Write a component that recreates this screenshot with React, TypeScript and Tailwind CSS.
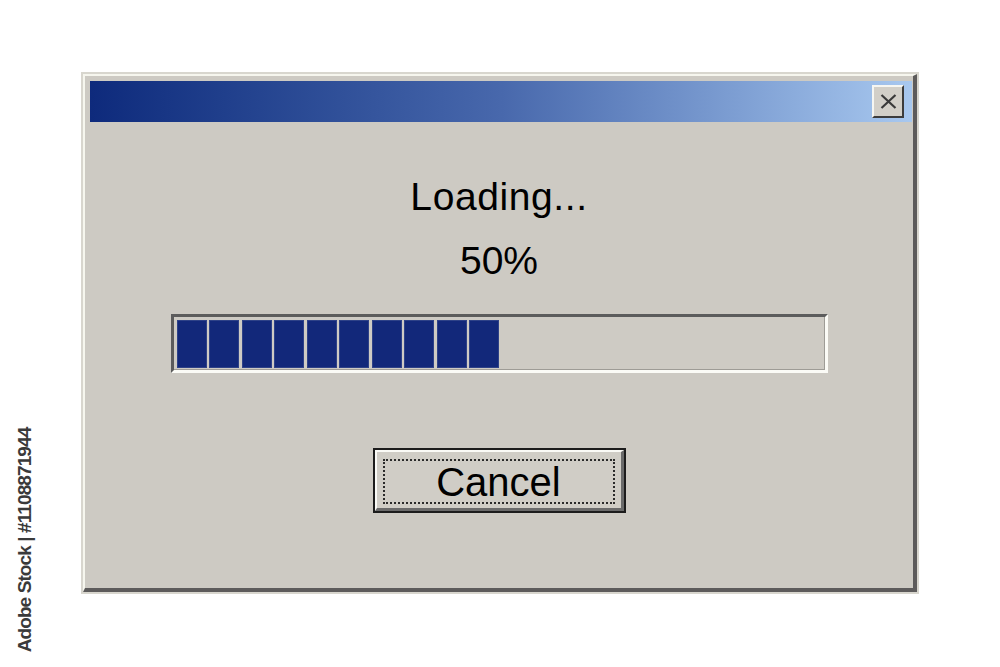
import React from 'react';

const BLOCKS = 10;

function CloseButton() {
  return (
    <button className="flex h-[33px] w-[32px] items-center justify-center border-2 border-t-[#f6f6f2] border-l-[#f6f6f2] border-r-[#3c3c3c] border-b-[#3c3c3c] bg-[#d2cfc8]">
      <svg width="17" height="15" viewBox="0 0 17 15">
        <path d="M1.5 1 L15.5 14 M15.5 1 L1.5 14" stroke="#3a3a3a" strokeWidth="2.2" />
      </svg>
    </button>
  );
}

function ProgressTrough() {
  return (
    <div className="h-[59px] w-[657px] border-t-[3px] border-l-[3px] border-r-[3px] border-b-[3px] border-t-[#5c5c5c] border-l-[#5c5c5c] border-r-[#fbfbf6] border-b-[#fbfbf6]">
      <div className="flex h-full w-full gap-[2.5px] border-r border-b border-[#9e9c96] bg-[#cecbc4] pl-[3px] pt-[3px] pb-[1px]">
        {Array.from({ length: BLOCKS }).map((_, i) => (
          <div
            key={i}
            className="h-full w-[30px] border border-[#2e4288] bg-[#12287a]"
          />
        ))}
      </div>
    </div>
  );
}

function CancelButton() {
  return (
    <button className="h-[65px] w-[253px] border-2 border-[#1c1c1c] bg-[#d0cdc6]">
      <div className="h-full w-full border-t-2 border-l-2 border-r-[3px] border-b-[3px] border-t-[#fafaf6] border-l-[#fafaf6] border-r-[#6a6a6a] border-b-[#6a6a6a] px-[6px] pt-[7px] pb-[4px]">
        <div className="flex h-full w-full items-center justify-center border-2 border-dotted border-[#2a2a2a]">
          <span className="text-[40px] leading-none text-black">Cancel</span>
        </div>
      </div>
    </button>
  );
}

export default function App() {
  return (
    <div
      className="relative h-[667px] w-[1000px] overflow-hidden bg-white pl-[81px] pt-[72px]"
      style={{ fontFamily: '"Liberation Sans", Arial, sans-serif' }}
    >
      {/* window */}
      <div className="w-[838px] border-2 border-[#d8d6ce]">
        <div className="border-t-2 border-l-2 border-r-4 border-b-4 border-t-[#f6f6ee] border-l-[#f6f6ee] border-r-[#5d5b5b] border-b-[#5d5b5b] bg-[#cdcac3] pl-[5px] pr-[1px] pt-[5px]">
          {/* title bar */}
          <div className="flex h-[41px] items-center justify-end bg-linear-to-r from-[#0e2a7c] via-[#4868ac] to-[#a8c8ef] pr-[8px]">
            <CloseButton />
          </div>

          <div className="flex flex-col items-center pr-[4px]">
            <div className="mt-[55px] text-[39px] leading-none tracking-[0.6px] text-black">Loading...</div>
            <div className="mt-[25px] text-[39px] leading-none text-black">50%</div>
            <div className="mt-[34px]">
              <ProgressTrough />
            </div>
            <div className="mt-[75px] mb-[75px]">
              <CancelButton />
            </div>
          </div>
        </div>
      </div>

      {/* side credit */}
      <div className="absolute left-[24px] top-[540px] -translate-x-1/2 -translate-y-1/2 -rotate-90 whitespace-nowrap text-[19px] font-bold leading-none tracking-[-0.9px] text-[#3a3a3a]">
        Adobe Stock | #1108871944
      </div>
    </div>
  );
}
